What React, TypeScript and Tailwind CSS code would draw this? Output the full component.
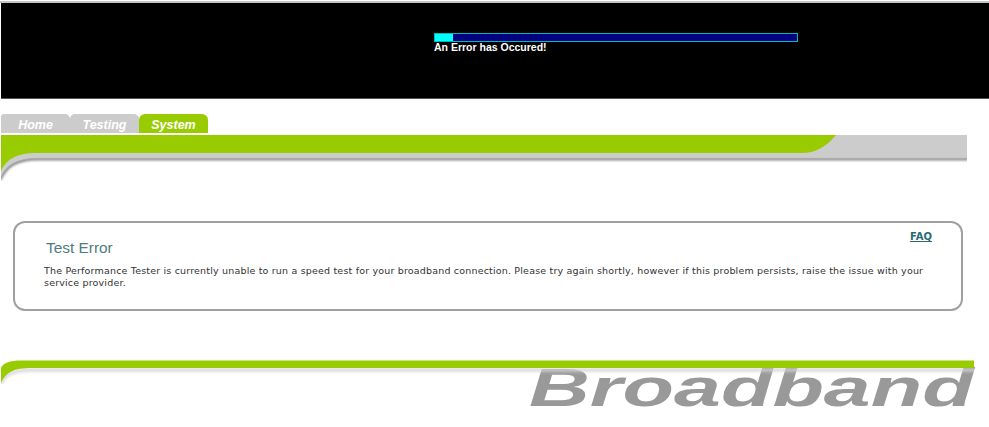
import React from 'react';

// Green swoosh band under the tabs
const TopBand = () => (
  <svg width="989" height="46" viewBox="0 135 989 46" className="block">
    <defs>
      <filter id="softTop" x="-5%" y="-100%" width="110%" height="300%">
        <feGaussianBlur stdDeviation="1.2" />
      </filter>
      <clipPath id="clipTop">
        <rect x="1" y="135" width="966" height="46" />
      </clipPath>
    </defs>
    <g clipPath="url(#clipTop)">
      <path d="M0 180 C6 165 18 159 38 159 H970" fill="none" stroke="#8e8e8e" strokeWidth="3" filter="url(#softTop)" />
      <path d="M1 135 H967 V157.5 H38 C18 157.5 7 164 1 176 Z" fill="#cccccc" />
      <path d="M1 135 H836 C826 147 815 153 802 153 H36 C16 153 6 160 1 171 Z" fill="#99cc00" />
    </g>
  </svg>
);

const BottomBand = () => (
  <svg width="975" height="24" viewBox="0 359 975 24" className="block">
    <defs>
      <filter id="softBottom" x="-5%" y="-100%" width="110%" height="300%">
        <feGaussianBlur stdDeviation="1.5" />
      </filter>
      <clipPath id="clipBottom">
        <rect x="1" y="359" width="973" height="24" />
      </clipPath>
    </defs>
    <g clipPath="url(#clipBottom)">
      <path d="M0 384 C4 373 14 369 34 369 H980" fill="none" stroke="#d4d4d4" strokeWidth="3" filter="url(#softBottom)" />
      <path d="M1 382 V367 C3 362 9 359.5 22 359.5 H974 V367 H32 C14 367 6 371 1 382 Z" fill="#99cc00" />
    </g>
  </svg>
);

const tabs = [
  { name: 'Home', cls: 'bg-[#cccccc] rounded-tl-[3px] rounded-tr-[5px]' },
  { name: 'Testing', cls: 'bg-[#cccccc] rounded-tl-[5px] rounded-tr-[5px]' },
  { name: 'System', cls: 'bg-[#99cc00] rounded-t-[6px]' },
];

export default function App() {
  return (
    <div className="w-[989px] h-[427px] overflow-hidden bg-white font-['Liberation_Sans',Arial,sans-serif]">
      <div className="mt-px h-[2px] bg-[#c4c4c4]" />
      <header className="ml-px h-[96px] bg-black pl-[433px] pt-[30px] border-b border-[#555]">
        <div className="w-[364px] h-[9px] border border-[#00bcbc] bg-[#000080]">
          <div className="w-[18px] h-full bg-[#00ffff]" />
        </div>
        <p className="text-[10.5px] leading-[11px] font-bold text-white">An Error has Occured!</p>
      </header>

      <nav className="ml-px mt-[15px] flex h-[19px]">
        {tabs.map((t) => (
          <div
            key={t.name}
            className={`w-[69px] text-center text-[12.5px] leading-[22px] font-bold italic text-white ${t.cls}`}
          >
            {t.name}
          </div>
        ))}
      </nav>

      <div className="mt-[2px]">
        <TopBand />
      </div>

      <section className="relative ml-[13px] mt-[40px] w-[950px] h-[90px] rounded-xl border-2 border-[#a0a0a0] pl-[31px] pt-[15px]">
        <a className="absolute right-[29px] top-[6px] font-['DejaVu_Sans',Verdana,sans-serif] text-[10px] font-bold text-[#2a6a72] underline">
          FAQ
        </a>
        <h2 className="text-[15.4px] leading-[20px] text-[#4f7d7d]">Test Error</h2>
        <p className="mt-[7px] -ml-[2px] w-[885px] font-['DejaVu_Sans',Verdana,sans-serif] text-[9.5px] tracking-[0.18px] leading-[11.5px] text-[#333333]">
          The Performance Tester is currently unable to run a speed test for your broadband connection. Please try again shortly, however if this problem persists, raise the issue with your service provider.
        </p>
      </section>

      <footer className="relative mt-[49px] w-[975px] h-[60px]">
        <span className="absolute left-[529px] top-[-3px] origin-left scale-x-[1.56] text-[54px] leading-[60px] font-bold italic text-[#999999] whitespace-nowrap">
          Broadband
        </span>
        <div className="relative">
          <BottomBand />
        </div>
      </footer>
    </div>
  );
}
